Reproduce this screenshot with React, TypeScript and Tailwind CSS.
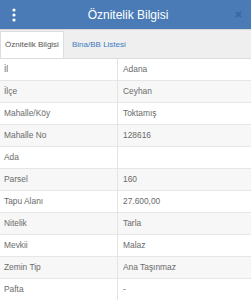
import React from "react";

const rows: [string, string][] = [
  ["İl", "Adana"],
  ["İlçe", "Ceyhan"],
  ["Mahalle/Köy", "Toktamış"],
  ["Mahalle No", "128616"],
  ["Ada", ""],
  ["Parsel", "160"],
  ["Tapu Alanı", "27.600,00"],
  ["Nitelik", "Tarla"],
  ["Mevkii", "Malaz"],
  ["Zemin Tip", "Ana Taşınmaz"],
  ["Pafta", "-"],
];

export default function App() {
  return (
    <div
      className="w-[251px] h-[300px] overflow-hidden bg-white"
      style={{ fontFamily: '"Liberation Sans", Arial, sans-serif' }}
    >
      <div className="h-[29px] bg-[#4a7bb7] flex items-center justify-between pl-[11px] pr-[9px]">
        <svg width="6" height="14" viewBox="0 0 6 14">
          <circle cx="3" cy="2" r="1.6" fill="#fff" />
          <circle cx="3" cy="7" r="1.6" fill="#fff" />
          <circle cx="3" cy="12" r="1.6" fill="#fff" />
        </svg>
        <div className="text-white text-[12px] leading-none ml-[4px]">Öznitelik Bilgisi</div>
        <svg width="7" height="7" viewBox="0 0 7 7">
          <path d="M1 1L6 6M6 1L1 6" stroke="#3a679e" strokeWidth="1.8" />
        </svg>
      </div>
      <div className="h-[30px] bg-[#efefef] border-t border-[#d8d8d8] border-b border-b-[#dcdcdc] flex items-end">
        <div className="h-[27px] w-[64px] bg-white border border-[#dddddd] border-b-0 flex items-center justify-center text-[8px] text-[#555]">
          Öznitelik Bilgisi
        </div>
        <div className="h-[27px] pl-[8px] flex items-center text-[8px] text-[#3a7bbf]">
          Bina/BB Listesi
        </div>
      </div>
      <div className="flex flex-col">
        {rows.map(([k, v], i) => (
          <div
            key={k}
            className={`flex h-[22px] border-b border-[#e6e6e6] text-[8.4px] text-[#6a6a6a] ${
              i % 2 === 1 ? "bg-[#f7f7f7]" : "bg-white"
            }`}
          >
            <div className="w-[118px] border-r border-[#e3e3e3] flex items-center pl-[4px]">{k}</div>
            <div className="flex-1 flex items-center pl-[5px]">{v}</div>
          </div>
        ))}
      </div>
    </div>
  );
}
